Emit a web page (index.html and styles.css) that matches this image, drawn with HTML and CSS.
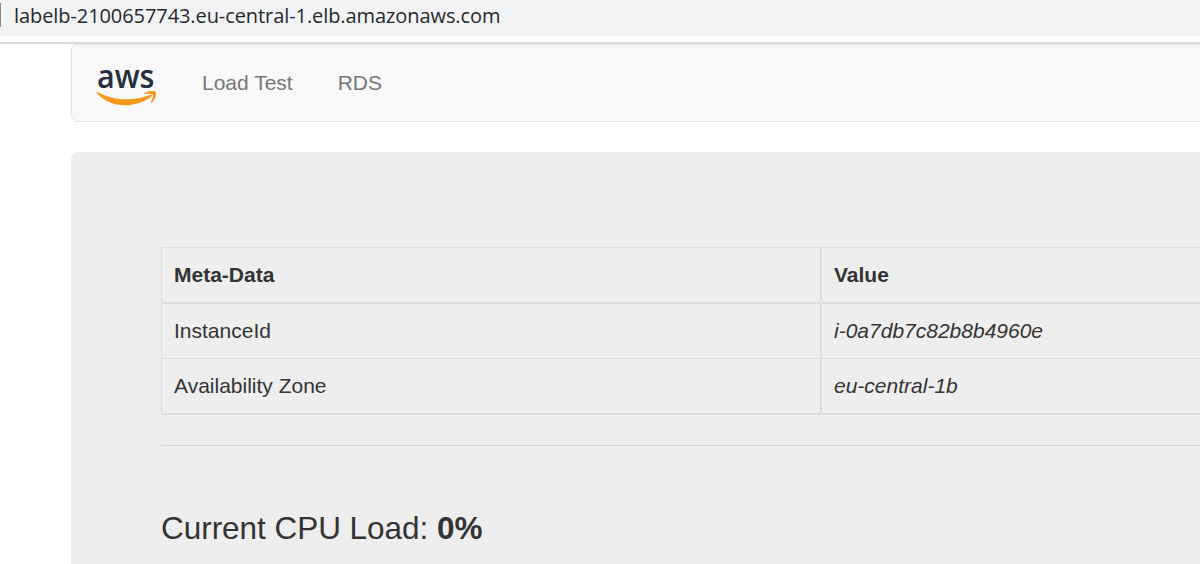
FILE: index.html
```html
<!DOCTYPE html>
<html lang="en">
<head>
<meta charset="utf-8">
<title>Load Test</title>
<link rel="stylesheet" href="styles.css">
</head>
<body>
<div class="address-bar"><span class="caret"></span><span class="url">labelb-2100657743.eu-central-1.elb.amazonaws.com</span></div>
<div class="page">
  <nav class="navbar">
    <svg class="logo" width="62" height="42" viewBox="0 0 62 42">
      <text class="logo-text" x="1" y="23" textLength="57.500" lengthAdjust="spacingAndGlyphs">aws</text>
      <path d="M.8 28.200C.1 27.400 1 26.700 2 27.200C19 36 38 36.300 54 30C56 29.200 57 30.500 55.400 31.700C47 37.600 38 40.200 29 40.200C17.500 40.200 7.500 35.500.8 28.200Z" fill="#f7981d"/>
      <path d="M48.500 28C52 25.500 58.500 25.400 59.700 26.700C60.900 28.200 59.400 34.500 56 37.500C55.300 38.100 54.700 37.700 55 37C56 34.500 57.600 30.900 56.700 29.700C55.700 28.400 51.700 28.800 49 29.100C48.100 29.200 47.900 28.500 48.500 28Z" fill="#f7981d"/>
    </svg>
    <a class="nav-link">Load Test</a>
    <a class="nav-link">RDS</a>
  </nav>
  <main class="jumbotron">
    <table class="meta">
      <thead><tr><th class="key">Meta-Data</th><th>Value</th></tr></thead>
      <tbody>
        <tr><td>InstanceId</td><td><i>i-0a7db7c82b8b4960e</i></td></tr>
        <tr><td>Availability Zone</td><td><i>eu-central-1b</i></td></tr>
      </tbody>
    </table>
    <hr class="rule">
    <div class="load">Current CPU Load: <b>0%</b></div>
  </main>
</div>
</body>
</html>
```
FILE: styles.css
```css
* { box-sizing: border-box; }
body {
  margin: 0;
  height: 564px;
  overflow: hidden;
  background: #fff;
  color: #333;
  font: 21px/30px "Liberation Sans", Arial, sans-serif;
}
.address-bar {
  display: flex;
  height: 36px;
  padding-top: 3px;
  background: #f1f3f4;
}
.caret { width: 1px; height: 24px; background: #8b8688; }
.url {
  margin-left: 13px;
  color: #27282b;
  font: 20px/26px "Open Sans", "Noto Sans", sans-serif;
  letter-spacing: -0.08px;
  white-space: nowrap;
}
.page {
  margin-top: 6px;
  border-top: 2px solid #dbdbdb;
  padding-left: 71px;
  overflow: hidden;
}
.navbar {
  display: flex;
  width: 1300px;
  height: 78px;
  padding: 20px 0 0 24px;
  border: 1px solid #e4e4e4;
  border-radius: 6px;
  background: #f8f8f8;
}
.logo { flex: none; margin-right: 44px; overflow: visible; }
.logo-text { font: 600 33px "Open Sans", sans-serif; fill: #252f3e; }
.nav-link { margin: 3px 45px 0 0; color: #777; white-space: nowrap; }
.jumbotron {
  width: 1300px;
  height: 412px;
  margin-top: 30px;
  padding: 95px 0 0 90px;
  border-radius: 8px 8px 0 0;
  background: #eee;
}
.meta {
  width: 1320px;
  border-spacing: 0;
  border: solid #ddd;
  border-width: 1px 0 2px 1px;
  table-layout: fixed;
}
.meta th, .meta td { height: 54px; padding: 0 12px; text-align: left; }
.meta th { height: 56px; border-bottom: 2px solid #ddd; }
.meta .key { width: 660px; }
.meta th:first-child, .meta td:first-child { border-right: 2px solid #ddd; }
.meta tbody tr:first-child td { height: 55px; border-bottom: 1px solid #ddd; }
.rule { margin: 30px 0 0; border: 0; border-top: 1px solid #d5d5d5; }
.load { margin-top: 64px; font-size: 31.5px; line-height: 36px; letter-spacing: -0.04px; }
```
